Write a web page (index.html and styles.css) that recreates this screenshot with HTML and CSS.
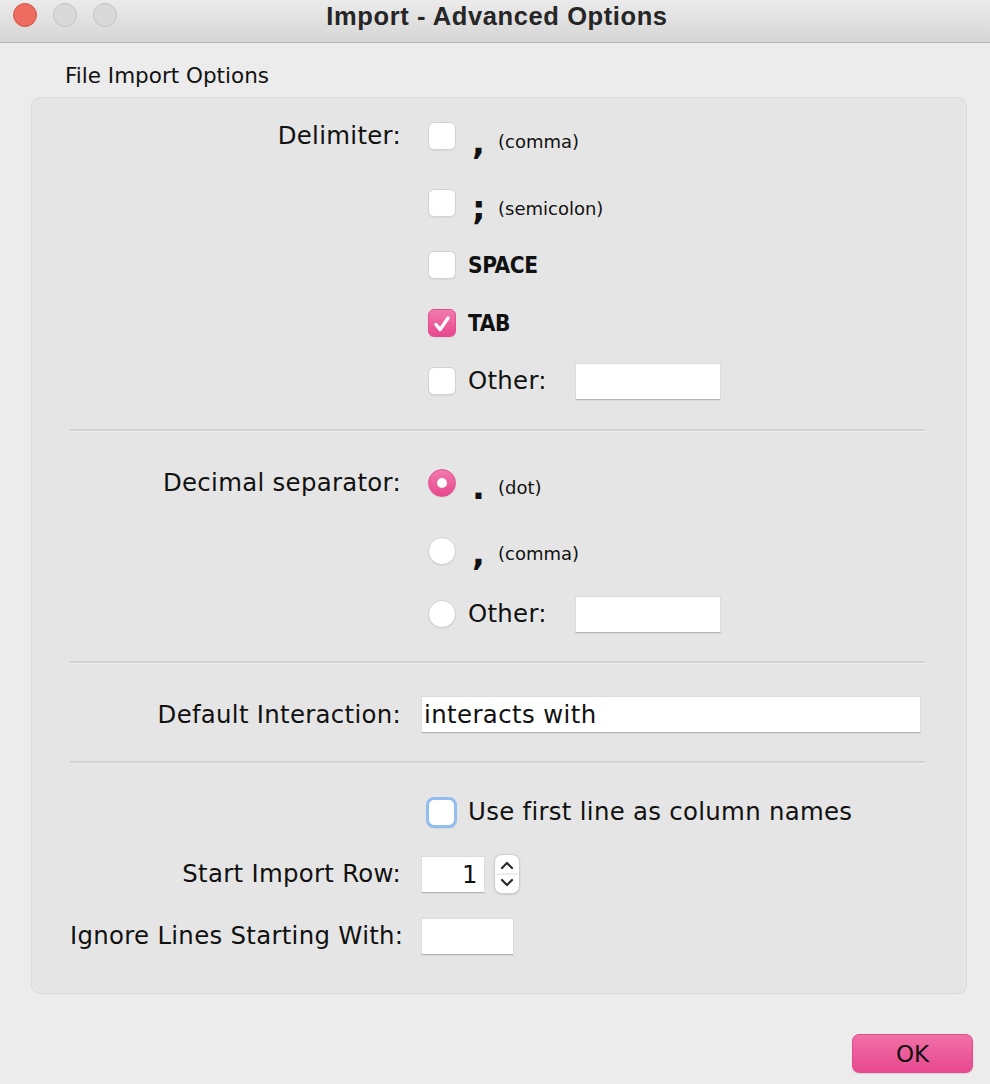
FILE: index.html
```html
<!DOCTYPE html>
<html lang="en">
<head>
<meta charset="utf-8">
<title>Import - Advanced Options</title>
<link rel="stylesheet" href="styles.css">
</head>
<body>
<div class="window">
  <header class="titlebar">
    <div class="lights">
      <span class="light red"></span>
      <span class="light"></span>
      <span class="light"></span>
    </div>
    <div class="title">Import - Advanced Options</div>
  </header>

  <main class="content">
    <div class="group-title">File Import Options</div>
    <div class="panel">
      <section class="sec sec-delim">
        <div class="label tall">Delimiter:</div>
        <div class="opts">
          <div class="opt tall"><span class="cb"></span><span class="glyph">,</span><span class="small">(comma)</span></div>
          <div class="opt mid"><span class="cb"></span><span class="glyph">;</span><span class="small">(semicolon)</span></div>
          <div class="opt"><span class="cb"></span><span class="bold">SPACE</span></div>
          <div class="opt"><span class="cb checked"><svg viewBox="0 0 28 28" width="28" height="28"><polyline points="7.5,14.5 12,20 20.5,7.5" fill="none" stroke="#fff" stroke-width="3.6" stroke-linecap="round" stroke-linejoin="round"/></svg></span><span class="bold">TAB</span></div>
          <div class="opt"><span class="cb"></span><span class="text">Other:</span><span class="input other"></span></div>
        </div>
      </section>
      <hr class="sep sep1">
      <section class="sec sec-dec">
        <div class="label tall">Decimal separator:</div>
        <div class="opts">
          <div class="opt tall"><span class="rb on"></span><span class="glyph dot">.</span><span class="small">(dot)</span></div>
          <div class="opt tall"><span class="rb"></span><span class="glyph">,</span><span class="small">(comma)</span></div>
          <div class="opt"><span class="rb"></span><span class="text">Other:</span><span class="input other"></span></div>
        </div>
      </section>
      <hr class="sep sep2">
      <section class="sec sec-int">
        <div class="label">Default Interaction:</div>
        <div class="input wide">interacts with</div>
      </section>
      <hr class="sep sep3">
      <section class="sec sec-misc">
        <div class="label"></div>
        <div class="opt"><span class="cb focus"></span><span class="text">Use first line as column names</span></div>
        <div class="label">Start Import Row:</div>
        <div class="spin-row">
          <span class="input num">1</span>
          <span class="spinner">
            <svg viewBox="0 0 26 40" width="26" height="40">
              <line x1="2" y1="20" x2="24" y2="20" stroke="#dddddd" stroke-width="1"/>
              <polyline points="8,14 13,9 18,14" fill="none" stroke="#2a2a2a" stroke-width="2.2" stroke-linecap="round" stroke-linejoin="round"/>
              <polyline points="8,26 13,31 18,26" fill="none" stroke="#2a2a2a" stroke-width="2.2" stroke-linecap="round" stroke-linejoin="round"/>
            </svg>
          </span>
        </div>
        <div class="label">Ignore Lines Starting With:</div>
        <div class="ctrl"><span class="input short"></span></div>
      </section>
    </div>
    <div class="footer">
      <button class="ok">OK</button>
    </div>
  </main>
</div>
</body>
</html>
```

FILE: styles.css
```css
* { box-sizing: border-box; }

html, body {
  margin: 0;
  padding: 0;
  background: #ececec;
}

body {
  font-family: "DejaVu Sans", "Liberation Sans", sans-serif;
  color: #111;
  width: 990px;
  height: 1084px;
  overflow: hidden;
}

.window {
  width: 990px;
  height: 1084px;
  background: #ececec;
}

/* Title bar */
.titlebar {
  position: relative;
  height: 43px;
  background: linear-gradient(#ebebeb, #d6d6d6);
  border-bottom: 1px solid #b3b3b3;
  display: flex;
  align-items: flex-start;
  justify-content: center;
  padding-top: 1px;
}

.lights {
  position: absolute;
  left: 13px;
  top: 3px;
  display: flex;
  gap: 16px;
}

.light {
  width: 24px;
  height: 24px;
  border-radius: 50%;
  background: #d9d9d9;
  border: 1px solid #c4c4c4;
}

.light.red {
  background: #ee6b60;
  border-color: #d8554b;
}

.title {
  font-family: "Liberation Sans", "Open Sans", sans-serif;
  font-weight: 700;
  font-size: 25.5px;
  line-height: 30px;
  color: #262626;
  letter-spacing: 0.6px;
  margin-left: 4px;
}

/* Content */
.group-title {
  margin: 21px 0 9px 65px;
  height: 24px;
  line-height: 24px;
  font-size: 21.5px;
}

.panel {
  margin-left: 31px;
  width: 936px;
  height: 897px;
  background: #e5e5e5;
  border: 1px solid #dadada;
  border-radius: 9px;
  padding: 14px 41px 0 38px;
}

.sec {
  display: grid;
  grid-template-columns: 331px 1fr;
  column-gap: 20px;
  align-items: start;
}

.label {
  font-size: 24.4px;
  letter-spacing: 0.3px;
  text-align: right;
  height: 38px;
  line-height: 38px;
  white-space: nowrap;
}

.label.tall {
  height: 48px;
  line-height: 48px;
}

.opts {
  display: flex;
  flex-direction: column;
  gap: 20px;
  padding-left: 7px;
}

.opt {
  display: flex;
  align-items: center;
  height: 38px;
}

.opt.tall { height: 48px; }
.opt.mid { height: 46px; }

.cb {
  width: 28px;
  height: 28px;
  flex: none;
  background: #ffffff;
  border: 1px solid #d2d2d2;
  border-radius: 6px;
  box-shadow: 0 1px 1px rgba(0,0,0,0.06);
  margin-right: 12px;
  display: flex;
}

.cb.checked {
  background: linear-gradient(#f27aab, #e8478f);
  border-color: #e0508f;
}

.cb.focus {
  width: 31px;
  height: 31px;
  border: 3px solid #92bdf0;
  border-radius: 8px;
  margin-left: -2px;
  margin-right: 11px;
}

.rb {
  width: 28px;
  height: 28px;
  flex: none;
  background: #ffffff;
  border: 1px solid #d2d2d2;
  border-radius: 50%;
  box-shadow: 0 1px 1px rgba(0,0,0,0.06);
  margin-right: 12px;
  position: relative;
}

.rb.on {
  background: linear-gradient(#f27aab, #e8478f);
  border-color: #e0508f;
}

.rb.on::after {
  content: "";
  position: absolute;
  left: 50%;
  top: 50%;
  width: 10px;
  height: 10px;
  margin: -5px 0 0 -5px;
  border-radius: 50%;
  background: #fff;
}

.glyph {
  font-weight: 700;
  font-size: 34px;
  line-height: 40px;
  width: 30px;
  padding-left: 4px;
  position: relative;
  top: 0px;
}

.small {
  font-size: 18px;
  line-height: 24px;
  position: relative;
  top: 6px;
}

.sec-delim .opt.mid .small { top: 6px; }
.sec-delim .opt.mid .glyph { top: 5px; }
.sec-delim .opt.tall .glyph { top: 6px; }
.sec-dec .glyph { top: 4px; }
.sec-dec .small { top: 5px; }
.sec-dec .opt.tall + .opt.tall .small { top: 3px; }
.sec-dec .opt.tall + .opt.tall .glyph { top: 2px; }

.bold {
  font-family: "DejaVu Sans Condensed", "DejaVu Sans", sans-serif;
  font-weight: 700;
  font-size: 22.5px;
  letter-spacing: -0.4px;
}

.text {
  font-size: 24.4px;
  letter-spacing: 0.3px;
  line-height: 30px;
  white-space: nowrap;
}

.input {
  display: block;
  background: #ffffff;
  border: 1px solid #dcdcdc;
  border-bottom-color: #b5b5b5;
  box-shadow: 0 1px 0 rgba(0,0,0,0.05);
  font-size: 24.4px;
  letter-spacing: 0.4px;
  line-height: 35px;
  color: #111;
}

.input.other {
  width: 146px;
  height: 37px;
  margin-left: 28px;
}

/* section vertical spacing */
.sep {
  border: 0;
  height: 3px;
  border-top: 2px solid #d4d4d4;
  border-bottom: 1px solid #efefef;
  margin: 0;
}

.sep1 { margin: 29px 0 27px; }
.sep2 { margin: 28px 0 32px; }
.sep3 { margin: 28px 0 29px; }

.sec-int .label { height: 37px; line-height: 37px; }

.input.wide {
  width: 500px;
  height: 37px;
  padding-left: 2px;
}

.sec-misc {
  grid-template-rows: 38px 38px 38px;
  row-gap: 24px;
}

.sec-misc .opt {
  padding-left: 7px;
}

.spin-row {
  display: flex;
  align-items: center;
  height: 38px;
  gap: 9px;
}

.input.num {
  width: 64px;
  height: 37px;
  text-align: right;
  padding-right: 6px;
}

.spinner {
  width: 26px;
  height: 40px;
  background: #ffffff;
  border: 1px solid #cfcfcf;
  border-radius: 8px;
  box-shadow: 0 1px 2px rgba(0,0,0,0.12);
  display: flex;
  overflow: hidden;
}

.spinner svg { display: block; margin: -1px; }

.ctrl {
  height: 38px;
  display: flex;
  align-items: center;
}

.input.short {
  width: 93px;
  height: 37px;
}

/* footer */
.footer {
  display: flex;
  justify-content: flex-end;
  padding: 40px 17px 0 0;
}

.ok {
  width: 121px;
  height: 39px;
  border: 1px solid #e14a8b;
  border-radius: 7px;
  background: linear-gradient(#f070a6, #e84890);
  font-family: "DejaVu Sans", sans-serif;
  font-size: 23px;
  color: #111;
  padding: 0;
  box-shadow: 0 1px 1px rgba(0,0,0,0.1);
}
```
